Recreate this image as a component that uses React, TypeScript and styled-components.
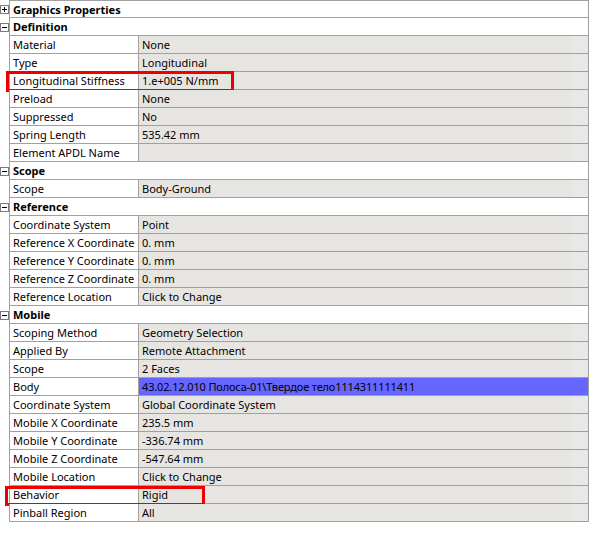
import React from "react";
import styled, { createGlobalStyle, css } from "styled-components";

const Global = createGlobalStyle`
  html, body { margin: 0; padding: 0; background: #ffffff; }
  body { font-family: "Noto Sans", "Liberation Sans", sans-serif; font-size: 11px; color: #000; }
`;

const LINE = "#a0a0a0";

const Sheet = styled.div`
  width: 589px;
  display: flex;
  flex-direction: column;
`;

const Row = styled.div`
  position: relative;
  display: grid;
  grid-template-columns: 9px 130px 1fr;
  height: 18px;
`;

const Gutter = styled.div`
  display: flex;
  align-items: center;
  justify-content: flex-start;
`;

const Expander = styled.span`
  box-sizing: border-box;
  width: 9px;
  height: 9px;
  border: 1px solid #7a7a7a;
  background: #fff;
  position: relative;
  margin-top: 1px;
  &::before {
    content: "";
    position: absolute;
    left: 1px;
    right: 1px;
    top: 3px;
    height: 1px;
    background: #000;
  }
`;

const ExpanderPlus = styled(Expander)`
  &::after {
    content: "";
    position: absolute;
    top: 1px;
    bottom: 1px;
    left: 3px;
    width: 1px;
    background: #000;
  }
`;

const cellBase = css<{ $first?: boolean }>`
  box-sizing: border-box;
  border-bottom: 1px solid ${LINE};
  border-top: ${(p) => (p.$first ? `1px solid ${LINE}` : "none")};
  padding: 0 3px;
  display: flex;
  align-items: center;
  white-space: nowrap;
  overflow: hidden;
  line-height: 17px;
`;

const HeaderCell = styled.div<{ $first?: boolean }>`
  ${cellBase};
  grid-column: 2 / 4;
  border-left: 1px solid ${LINE};
  border-right: 1px solid ${LINE};
  background: #ffffff;
  font-weight: 700;
`;

const LabelCell = styled.div<{ $first?: boolean }>`
  ${cellBase};
  border-left: 1px solid ${LINE};
  border-right: 1px solid ${LINE};
  background: #ffffff;
`;

const ValueCell = styled.div<{ $first?: boolean; $selected?: boolean }>`
  ${cellBase};
  border-right: 1px solid ${LINE};
  letter-spacing: ${(p) => (p.$selected ? "-0.15px" : "normal")};
  background: ${(p) =>
    p.$selected
      ? "#6666ff"
      : "linear-gradient(to right, #e7e5e1 0, #e7e5e1 calc(100% - 16px), #e8e8e8 calc(100% - 16px))"};
`;

const Mark = styled.div<{ $left: number; $top: number; $width: number; $height: number }>`
  position: absolute;
  box-sizing: border-box;
  left: ${(p) => p.$left}px;
  top: ${(p) => p.$top}px;
  width: ${(p) => p.$width}px;
  height: ${(p) => p.$height}px;
  border: 3px solid #ee0000;
  pointer-events: none;
`;

type Item =
  | { kind: "header"; title: string; collapsed?: boolean }
  | {
      kind: "prop";
      label: string;
      value: string;
      selected?: boolean;
      mark?: { left: number; top: number; width: number; height: number };
    };

const items: Item[] = [
  { kind: "header", title: "Graphics Properties", collapsed: true },
  { kind: "header", title: "Definition" },
  { kind: "prop", label: "Material", value: "None" },
  { kind: "prop", label: "Type", value: "Longitudinal" },
  {
    kind: "prop",
    label: "Longitudinal Stiffness",
    value: "1.e+005 N/mm",
    mark: { left: 6, top: -1, width: 228, height: 21 },
  },
  { kind: "prop", label: "Preload", value: "None" },
  { kind: "prop", label: "Suppressed", value: "No" },
  { kind: "prop", label: "Spring Length", value: "535.42 mm" },
  { kind: "prop", label: "Element APDL Name", value: "" },
  { kind: "header", title: "Scope" },
  { kind: "prop", label: "Scope", value: "Body-Ground" },
  { kind: "header", title: "Reference" },
  { kind: "prop", label: "Coordinate System", value: "Point" },
  { kind: "prop", label: "Reference X Coordinate", value: "0. mm" },
  { kind: "prop", label: "Reference Y Coordinate", value: "0. mm" },
  { kind: "prop", label: "Reference Z Coordinate", value: "0. mm" },
  { kind: "prop", label: "Reference Location", value: "Click to Change" },
  { kind: "header", title: "Mobile" },
  { kind: "prop", label: "Scoping Method", value: "Geometry Selection" },
  { kind: "prop", label: "Applied By", value: "Remote Attachment" },
  { kind: "prop", label: "Scope", value: "2 Faces" },
  {
    kind: "prop",
    label: "Body",
    value: "43.02.12.010 Полоса-01\\Твердое тело1114311111411",
    selected: true,
  },
  { kind: "prop", label: "Coordinate System", value: "Global Coordinate System" },
  { kind: "prop", label: "Mobile X Coordinate", value: "235.5 mm" },
  { kind: "prop", label: "Mobile Y Coordinate", value: "-336.74 mm" },
  { kind: "prop", label: "Mobile Z Coordinate", value: "-547.64 mm" },
  { kind: "prop", label: "Mobile Location", value: "Click to Change" },
  {
    kind: "prop",
    label: "Behavior",
    value: "Rigid",
    mark: { left: 5, top: 0, width: 200, height: 20 },
  },
  { kind: "prop", label: "Pinball Region", value: "All" },
];

export default function App() {
  return (
    <>
      <Global />
      <Sheet>
        {items.map((it, i) => {
          const first = i === 0;
          if (it.kind === "header") {
            return (
              <Row key={i}>
                <Gutter>{it.collapsed ? <ExpanderPlus /> : <Expander />}</Gutter>
                <HeaderCell $first={first}>{it.title}</HeaderCell>
              </Row>
            );
          }
          return (
            <Row key={i}>
              <Gutter />
              <LabelCell $first={first}>{it.label}</LabelCell>
              <ValueCell $first={first} $selected={it.selected}>
                {it.value}
              </ValueCell>
              {it.mark && (
                <Mark
                  $left={it.mark.left}
                  $top={it.mark.top}
                  $width={it.mark.width}
                  $height={it.mark.height}
                />
              )}
            </Row>
          );
        })}
      </Sheet>
    </>
  );
}
